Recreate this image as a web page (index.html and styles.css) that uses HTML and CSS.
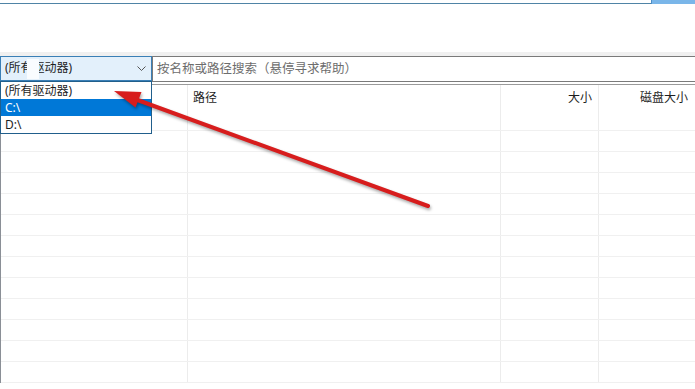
FILE: index.html
```html
<html>
<head>
	<meta charset="utf-8">
	<title>Everything</title>
	<link rel="stylesheet" href="styles.css">
</head>
<body>
	<div class="app">
		<div class="topStrip">
			<div class="topLine"></div>
			<div class="topBtn"></div>
		</div>
		<div class="menuArea"></div>
		<div class="searchBar">
			<div class="combo">
				<span class="comboTxt">(所有驱动器)</span>
				<span class="patch"></span>
				<svg class="chevron" width="9" height="6" viewBox="0 0 9 6">
					<polyline points="0.5,0.5 4.5,4.5 8.5,0.5" fill="none" stroke="#555" stroke-width="1"/>
				</svg>
			</div>
			<div class="search">按名称或路径搜索（悬停寻求帮助）</div>
		</div>
		<div class="list">
			<div class="row head">
				<div class="col name"></div>
				<div class="col path">路径</div>
				<div class="col size">大小</div>
				<div class="col disk">磁盘大小</div>
			</div>
			<div class="row"><div class="col name"></div><div class="col path"></div><div class="col size"></div><div class="col disk"></div></div>
			<div class="row"><div class="col name"></div><div class="col path"></div><div class="col size"></div><div class="col disk"></div></div>
			<div class="row"><div class="col name"></div><div class="col path"></div><div class="col size"></div><div class="col disk"></div></div>
			<div class="row"><div class="col name"></div><div class="col path"></div><div class="col size"></div><div class="col disk"></div></div>
			<div class="row"><div class="col name"></div><div class="col path"></div><div class="col size"></div><div class="col disk"></div></div>
			<div class="row"><div class="col name"></div><div class="col path"></div><div class="col size"></div><div class="col disk"></div></div>
			<div class="row"><div class="col name"></div><div class="col path"></div><div class="col size"></div><div class="col disk"></div></div>
			<div class="row"><div class="col name"></div><div class="col path"></div><div class="col size"></div><div class="col disk"></div></div>
			<div class="row"><div class="col name"></div><div class="col path"></div><div class="col size"></div><div class="col disk"></div></div>
			<div class="row"><div class="col name"></div><div class="col path"></div><div class="col size"></div><div class="col disk"></div></div>
			<div class="row"><div class="col name"></div><div class="col path"></div><div class="col size"></div><div class="col disk"></div></div>
			<div class="row"><div class="col name"></div><div class="col path"></div><div class="col size"></div><div class="col disk"></div></div>
			<div class="row"><div class="col name"></div><div class="col path"></div><div class="col size"></div><div class="col disk"></div></div>
		</div>

		<!-- 下拉框展开的列表 -->
		<ul class="dropList">
			<li>(所有驱动器)</li>
			<li class="current">C:\</li>
			<li>D:\</li>
		</ul>

		<!-- 红色箭头标注 -->
		<svg class="arrow" width="695" height="389" viewBox="0 0 695 389">
			<line x1="428" y1="206" x2="132" y2="98" stroke="#d71d1d" stroke-width="4" stroke-linecap="round"/>
			<polygon points="114,91 141.5,92 135.5,107.5" fill="#d71d1d"/>
		</svg>
	</div>
</body>
</html>
```

FILE: styles.css
```css
body, html, div, ul, li{
	padding: 0; margin: 0;
}
body{
	background: #fff;
	color: #1e1e1e;
	font: 12px/1.4 "Noto Sans", "Noto Sans CJK SC", sans-serif;
}
.app{
	position: relative;
	width: 695px;
	height: 389px;
	overflow: hidden;
}
.topStrip{
	display: flex;
	height: 4px;
}
.topLine{
	flex: 1;
	border-bottom: 1px solid #4f84a6;
}
.topBtn{
	width: 43px;
	background: #7ab6e9;
	border-left: 1px solid #4d8fc9;
}
.menuArea{
	height: 48px;
	border-bottom: 4px solid #f0f0f0;
}
.searchBar{
	display: flex;
	height: 26px;
}
.combo{
	position: relative;
	display: flex;
	align-items: center;
	border: 1px solid #3a7fb6;
	background: #e3f0fb;
	padding-left: 4px;
	box-sizing: border-box;
	width: 152px;
	height: 25px;
}
.comboTxt{
	flex: 1;
}
/* 截图里被涂白的一块 */
.patch{
	position: absolute;
	left: 26px;
	top: 2px;
	width: 12px;
	height: 20px;
	background: #f9fcff;
}
.chevron{
	margin-right: 5px;
}
.search{
	flex: 1;
	border: 1px solid #7a7a7a;
	border-right: 0 none;
	padding-left: 4px;
	line-height: 23px;
	color: #6d6d6d;
	font-size: 12.5px;
	height: 24px;
}
.list{
	margin-top: 2px;
	border-top: 1px solid #9a9a9a;
	border-left: 1px solid #8a8f96;
}
.row{
	display: flex;
	height: 20px;
	border-bottom: 1px solid #f0f0f0;
}
.row.head{
	height: 25px;
	line-height: 25px;
	border-bottom: 0 none;
}
.col{
	box-sizing: border-box;
	border-right: 1px solid #ececec;
}
.col.name{
	width: 187px;
}
.col.path{
	width: 313px;
	padding-left: 5px;
}
.col.size{
	width: 98px;
	text-align: right;
	padding-right: 6px;
}
.col.disk{
	flex: 1;
	text-align: right;
	padding-right: 7px;
	border-right: 0 none;
}
.dropList{
	position: absolute;
	left: 0;
	top: 81px;
	width: 152px;
	box-sizing: border-box;
	border: 1px solid #215f8c;
	background: #fff;
	list-style-type: none;
}
.dropList li{
	height: 17px;
	line-height: 17px;
	padding-left: 4px;
}
.dropList li.current{
	background: #0078d7;
	color: #fff;
}
.arrow{
	position: absolute;
	left: 0;
	top: 0;
	filter: drop-shadow(1px 2px 1.5px rgba(0,0,0,0.35));
}
```
